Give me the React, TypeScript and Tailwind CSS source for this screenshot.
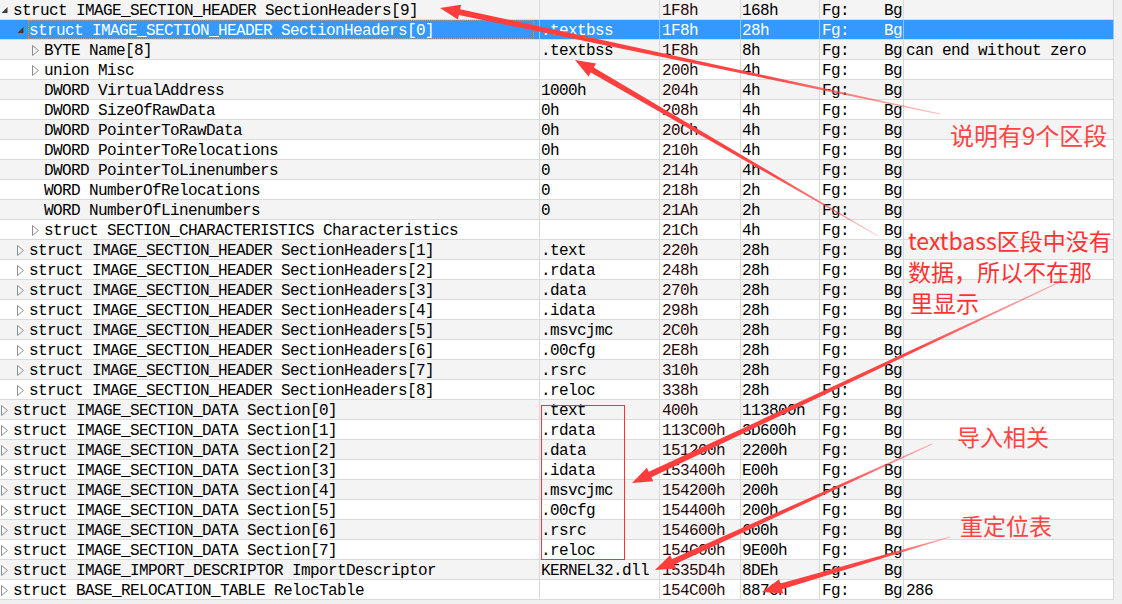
import clsx from 'clsx';

type Row = {
  name: string;
  level: 0 | 1 | 2;
  node?: 'open' | 'closed';
  value?: string;
  start: string;
  size: string;
  comment?: string;
  selected?: boolean;
};

const headers = ['.text', '.rdata', '.data', '.idata', '.msvcjmc', '.00cfg', '.rsrc', '.reloc'];
const headerStarts = ['220h', '248h', '270h', '298h', '2C0h', '2E8h', '310h', '338h'];
const dataStarts = ['400h', '113C00h', '151200h', '153400h', '154200h', '154400h', '154600h', '154C00h'];
const dataSizes = ['113800h', '3D600h', '2200h', 'E00h', '200h', '200h', '600h', '9E00h'];

const rows: Row[] = [
  { name: 'struct IMAGE_SECTION_HEADER SectionHeaders[9]', level: 0, node: 'open', start: '1F8h', size: '168h' },
  { name: 'struct IMAGE_SECTION_HEADER SectionHeaders[0]', level: 1, node: 'open', value: '.textbss', start: '1F8h', size: '28h', selected: true },
  { name: 'BYTE Name[8]', level: 2, node: 'closed', value: '.textbss', start: '1F8h', size: '8h', comment: 'can end without zero' },
  { name: 'union Misc', level: 2, node: 'closed', start: '200h', size: '4h' },
  { name: 'DWORD VirtualAddress', level: 2, value: '1000h', start: '204h', size: '4h' },
  { name: 'DWORD SizeOfRawData', level: 2, value: '0h', start: '208h', size: '4h' },
  { name: 'DWORD PointerToRawData', level: 2, value: '0h', start: '20Ch', size: '4h' },
  { name: 'DWORD PointerToRelocations', level: 2, value: '0h', start: '210h', size: '4h' },
  { name: 'DWORD PointerToLinenumbers', level: 2, value: '0', start: '214h', size: '4h' },
  { name: 'WORD NumberOfRelocations', level: 2, value: '0', start: '218h', size: '2h' },
  { name: 'WORD NumberOfLinenumbers', level: 2, value: '0', start: '21Ah', size: '2h' },
  { name: 'struct SECTION_CHARACTERISTICS Characteristics', level: 2, node: 'closed', start: '21Ch', size: '4h' },
  ...headers.map((v, i) => ({
    name: `struct IMAGE_SECTION_HEADER SectionHeaders[${i + 1}]`,
    level: 1 as const,
    node: 'closed' as const,
    value: v,
    start: headerStarts[i],
    size: '28h',
  })),
  ...headers.map((v, i) => ({
    name: `struct IMAGE_SECTION_DATA Section[${i}]`,
    level: 0 as const,
    node: 'closed' as const,
    value: v,
    start: dataStarts[i],
    size: dataSizes[i],
  })),
  { name: 'struct IMAGE_IMPORT_DESCRIPTOR ImportDescriptor', level: 0, node: 'closed', value: 'KERNEL32.dll', start: '1535D4h', size: '8DEh' },
  { name: 'struct BASE_RELOCATION_TABLE RelocTable', level: 0, node: 'closed', start: '154C00h', size: '887Ch', comment: '286' },
];

const indent = ['w-0', 'w-[16px]', 'w-[31px]'];

function Toggle({ node }: { node?: 'open' | 'closed' }) {
  return (
    <svg width="13" height="19" viewBox="0 0 13 19" className="shrink-0">
      {node === 'open' && <polygon points="7.5,7 7.5,13 1.5,13" fill="#3c3c3c" />}
      {node === 'closed' && (
        <polygon points="1.5,5.5 7.5,10.5 1.5,15.5" fill="none" stroke="#8e8e8e" strokeWidth="1" />
      )}
    </svg>
  );
}

function Arrow({ from, to, id }: { from: [number, number]; to: [number, number]; id: string }) {
  const [x1, y1] = from;
  const [x2, y2] = to;
  const len = Math.hypot(x2 - x1, y2 - y1);
  const ux = (x2 - x1) / len;
  const uy = (y2 - y1) / len;
  const nx = -uy;
  const ny = ux;
  const headLen = 20;
  const headW = 7.5;
  const shaft = 3;
  const tail = 0.4;
  const bx = x2 - ux * headLen;
  const by = y2 - uy * headLen;
  const pts = [
    [x1 + nx * tail, y1 + ny * tail],
    [bx + nx * shaft, by + ny * shaft],
    [bx + nx * headW, by + ny * headW],
    [x2, y2],
    [bx - nx * headW, by - ny * headW],
    [bx - nx * shaft, by - ny * shaft],
    [x1 - nx * tail, y1 - ny * tail],
  ]
    .map(([x, y]) => `${x.toFixed(1)},${y.toFixed(1)}`)
    .join(' ');

  return (
    <>
      <defs>
        <linearGradient id={id} gradientUnits="userSpaceOnUse" x1={x1} y1={y1} x2={x2} y2={y2}>
          <stop offset="0" stopColor="#ff4646" stopOpacity="0.35" />
          <stop offset="0.35" stopColor="#ff4646" stopOpacity="1" />
          <stop offset="1" stopColor="#ff3c3c" stopOpacity="1" />
        </linearGradient>
      </defs>
      <polygon points={pts} fill={`url(#${id})`} />
    </>
  );
}

function TableRow({ row, index }: { row: Row; index: number }) {
  const sel = row.selected;
  const line = sel ? 'border-[#8cc6ff]' : 'border-[#d9d9d9]';
  const cell = clsx('shrink-0 border-r h-[19px] pt-[3px] leading-[16px] whitespace-nowrap overflow-hidden', line);

  return (
    <div
      className={clsx(
        'flex h-[20px] w-[1114px] border-b border-[#dadada]',
        sel ? 'bg-[#3399ff] text-white' : index % 2 === 0 ? 'bg-[#f4f4f4] text-black' : 'bg-white text-black'
      )}
    >
      {/* name column with tree indent */}
      <div className={clsx('flex w-[540px] shrink-0 border-r h-[19px]', line)}>
        <div className={clsx('shrink-0', indent[row.level])} />
        <Toggle node={row.node} />
        <div
          className={clsx(
            'flex-1 h-[19px] pt-[3px] leading-[16px] whitespace-nowrap',
            sel && 'outline-1 outline-dotted outline-[#d9904a] -outline-offset-1 mr-[5px] -ml-[1px] pl-[1px]'
          )}
        >
          {row.name}
        </div>
      </div>
      <div className={clsx(cell, 'w-[120px] pl-[1px]')}>{row.value ?? ''}</div>
      <div className={clsx(cell, 'w-[81px] pl-[2px]', !sel && 'text-[#2a0a0a]')}>{row.start}</div>
      <div className={clsx(cell, 'w-[79px] pl-[1px]')}>{row.size}</div>
      <div className={clsx(cell, 'w-[84px] flex justify-between pl-[2px] pr-[1px]')}>
        <span>Fg:</span>
        <span>Bg</span>
      </div>
      <div className={clsx(cell, 'w-[210px] pl-[2px]')}>{row.comment ?? ''}</div>
    </div>
  );
}

export default function App() {
  return (
    <div
      className="relative w-[1122px] h-[604px] overflow-hidden bg-[#f0f0f0] text-[16px] tracking-[-0.6px]"
      style={{ fontFamily: '"Liberation Mono", "Noto Sans CJK SC", monospace' }}
    >
      {/* template results table */}
      <div className="flex flex-col">
        {rows.map((row, i) => (
          <TableRow key={i} row={row} index={i} />
        ))}
      </div>

      {/* red annotations drawn over the table */}
      <svg className="absolute inset-0 pointer-events-none" width="1122" height="604">
        <rect x="541.5" y="405.5" width="83" height="154" fill="none" stroke="#ff3030" strokeWidth="1" />
        <Arrow id="a1" from={[940, 114]} to={[440, 8]} />
        <Arrow id="a2" from={[878, 236]} to={[575, 60]} />
        <Arrow id="a3" from={[1064, 280]} to={[632, 483]} />
        <Arrow id="a4" from={[932, 444]} to={[655, 570]} />
        <Arrow id="a5" from={[950, 537]} to={[762, 592]} />
      </svg>

      <div
        className="absolute inset-0 pointer-events-none text-[#ff4444] tracking-normal"
        style={{ fontFamily: '"Noto Sans CJK SC", "Noto Sans", sans-serif' }}
      >
        <div className="absolute left-[950px] top-[123px] text-[24px] leading-none">说明有9个区段</div>
        <div className="absolute left-[908px] top-[225px] text-[23px] leading-[31px] text-[#ff3333]">
          <div>textbass区段中没有</div>
          <div>数据，所以不在那</div>
          <div className="pl-[2px]">里显示</div>
        </div>
        <div className="absolute left-[957px] top-[425px] text-[23px] leading-none">导入相关</div>
        <div className="absolute left-[960px] top-[514px] text-[23px] leading-none">重定位表</div>
      </div>
    </div>
  );
}
